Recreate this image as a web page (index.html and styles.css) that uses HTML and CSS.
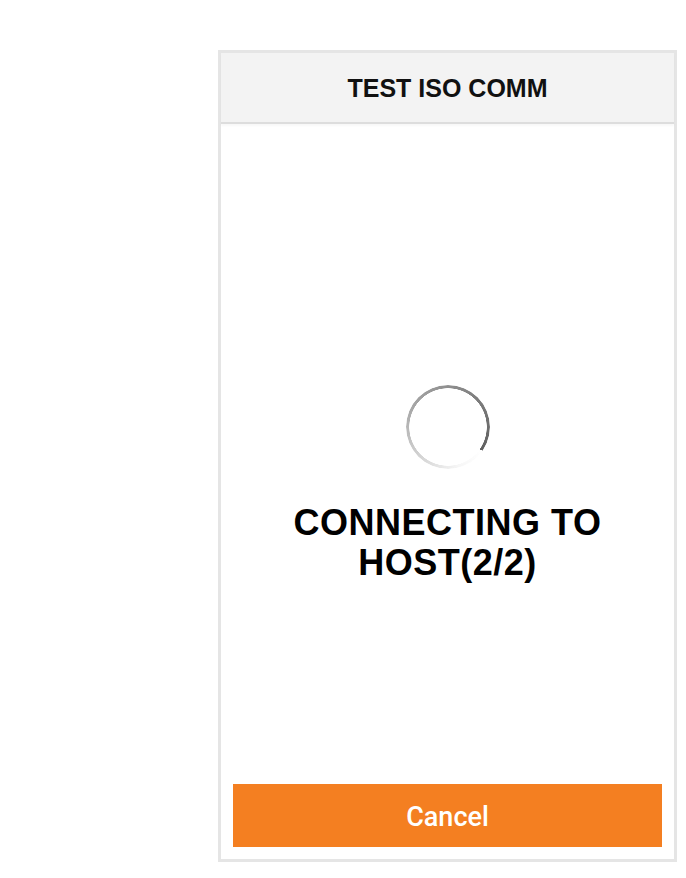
FILE: index.html
```html
<!DOCTYPE html>
<html>
<head>
<meta charset="utf-8">
<link rel="stylesheet" href="styles.css">
</head>
<body>
<div class="frame">
  <div class="header">TEST ISO COMM</div>
  <div class="content">
    <div class="spinner"></div>
    <div class="message">CONNECTING TO<br>HOST(2/2)</div>
  </div>
  <button class="cancel">Cancel</button>
</div>
</body>
</html>
```
FILE: styles.css
```css
html, body {
  margin: 0;
  padding: 0;
  background: #ffffff;
}
body {
  width: 686px;
  height: 878px;
  overflow: hidden;
}
.frame {
  box-sizing: border-box;
  margin: 50px 0 0 218px;
  width: 459px;
  height: 812px;
  border: 3px solid #e5e5e5;
  display: flex;
  flex-direction: column;
  background: #fff;
}
.header {
  box-sizing: border-box;
  height: 71px;
  background: #f3f3f3;
  border-bottom: 2px solid #dddddd;
  box-shadow: 0 2px 2px rgba(0,0,0,0.03);
  display: flex;
  align-items: center;
  justify-content: center;
  font-family: "Liberation Sans", Arial, sans-serif;
  font-weight: bold;
  font-size: 25px;
  color: #111;
  padding-top: 2px;
}
.content {
  flex: 1;
  display: flex;
  flex-direction: column;
  align-items: center;
  padding-top: 261px;
}
.spinner {
  width: 84px;
  height: 84px;
  border-radius: 50%;
  background: conic-gradient(from 125deg, rgba(110,110,110,0) 0deg, rgba(110,110,110,0.06) 40deg, rgba(110,110,110,0.6) 170deg, rgba(95,95,95,1) 360deg);
  -webkit-mask: radial-gradient(circle, transparent 38.5px, #000 39px, #000 42px, transparent 42.5px);
  mask: radial-gradient(circle, transparent 38.5px, #000 39px, #000 42px, transparent 42.5px);
}
.message {
  margin-top: 34px;
  font-family: "Liberation Sans", Arial, sans-serif;
  font-weight: bold;
  font-size: 36px;
  line-height: 40px;
  letter-spacing: 0.5px;
  text-align: center;
  color: #000;
}
.cancel {
  margin: 0 12px 12px 12px;
  height: 63px;
  border: none;
  background: #f47f21;
  color: #fff;
  font-family: Roboto, "Liberation Sans", sans-serif;
  font-weight: 500;
  font-size: 27px;
  padding: 2px 0 0 0;
}
```
